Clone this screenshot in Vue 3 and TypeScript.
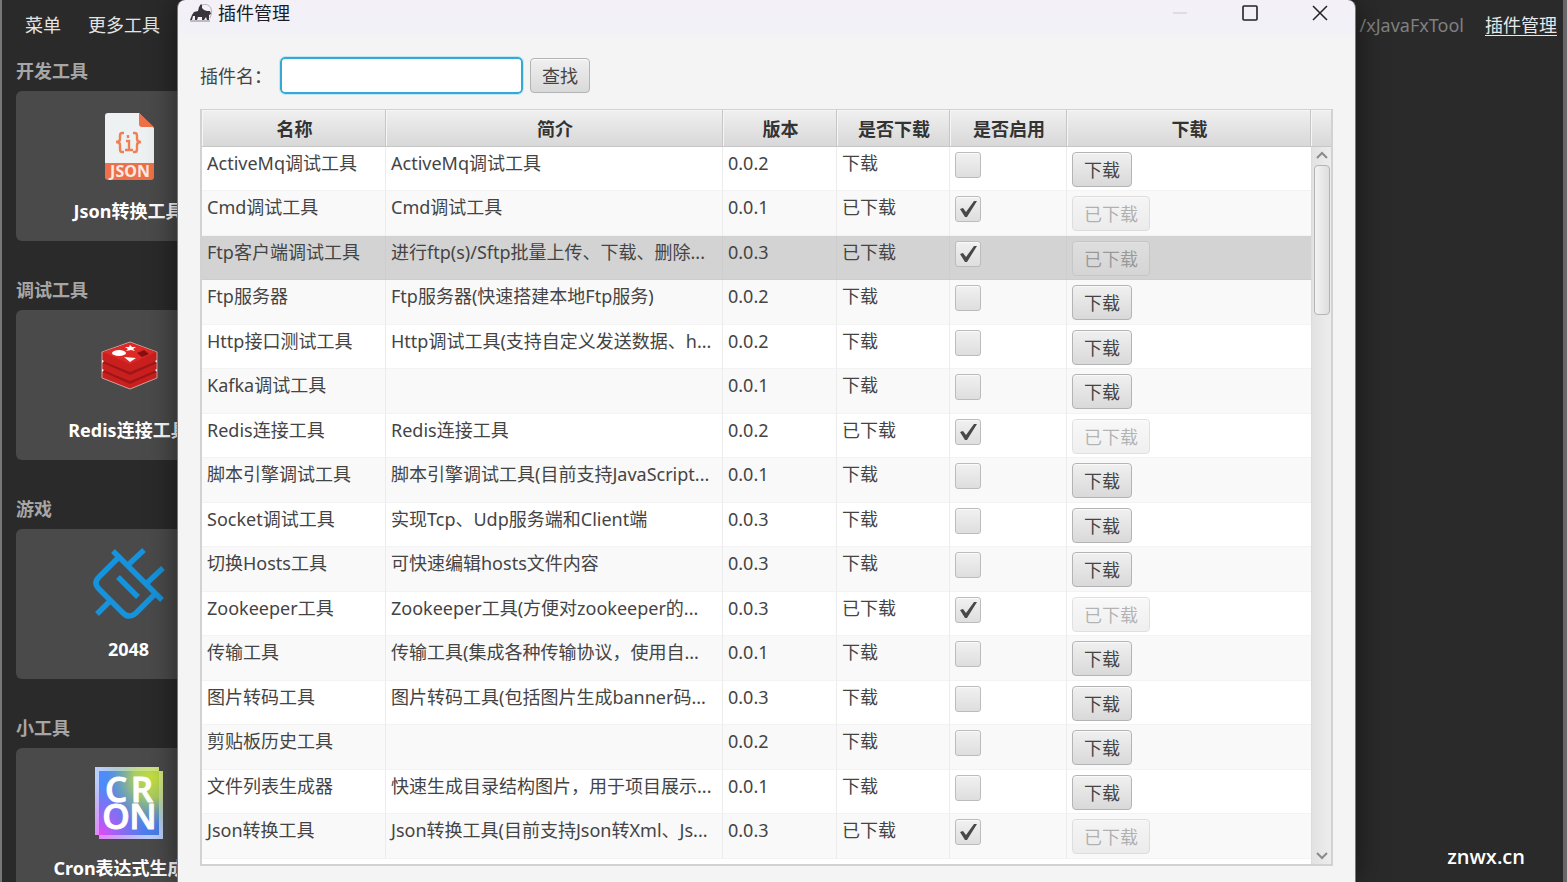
<script setup lang="ts">
import { ref } from 'vue'

interface Plugin {
  name: string
  desc: string
  version: string
  downloaded: boolean
}

const keyword = ref('')
const selected = ref(2)

const plugins = ref<Plugin[]>([
  { name: 'ActiveMq调试工具', desc: 'ActiveMq调试工具', version: '0.0.2', downloaded: false },
  { name: 'Cmd调试工具', desc: 'Cmd调试工具', version: '0.0.1', downloaded: true },
  { name: 'Ftp客户端调试工具', desc: '进行ftp(s)/Sftp批量上传、下载、删除...', version: '0.0.3', downloaded: true },
  { name: 'Ftp服务器', desc: 'Ftp服务器(快速搭建本地Ftp服务)', version: '0.0.2', downloaded: false },
  { name: 'Http接口测试工具', desc: 'Http调试工具(支持自定义发送数据、h...', version: '0.0.2', downloaded: false },
  { name: 'Kafka调试工具', desc: '', version: '0.0.1', downloaded: false },
  { name: 'Redis连接工具', desc: 'Redis连接工具', version: '0.0.2', downloaded: true },
  { name: '脚本引擎调试工具', desc: '脚本引擎调试工具(目前支持JavaScript...', version: '0.0.1', downloaded: false },
  { name: 'Socket调试工具', desc: '实现Tcp、Udp服务端和Client端', version: '0.0.3', downloaded: false },
  { name: '切换Hosts工具', desc: '可快速编辑hosts文件内容', version: '0.0.3', downloaded: false },
  { name: 'Zookeeper工具', desc: 'Zookeeper工具(方便对zookeeper的...', version: '0.0.3', downloaded: true },
  { name: '传输工具', desc: '传输工具(集成各种传输协议，使用自...', version: '0.0.1', downloaded: false },
  { name: '图片转码工具', desc: '图片转码工具(包括图片生成banner码...', version: '0.0.3', downloaded: false },
  { name: '剪贴板历史工具', desc: '', version: '0.0.2', downloaded: false },
  { name: '文件列表生成器', desc: '快速生成目录结构图片，用于项目展示...', version: '0.0.1', downloaded: false },
  { name: 'Json转换工具', desc: 'Json转换工具(目前支持Json转Xml、Js...', version: '0.0.3', downloaded: true },
])

const groups = [
  { title: '开发工具', icon: 'json', label: 'Json转换工具' },
  { title: '调试工具', icon: 'redis', label: 'Redis连接工具' },
  { title: '游戏', icon: 'plug', label: '2048' },
  { title: '小工具', icon: 'cron', label: 'Cron表达式生成器' },
]
</script>

<template>
  <div class="desktop">
    <header class="menubar">
      <nav class="menus">
        <button type="button">菜单</button>
        <button type="button">更多工具</button>
      </nav>
      <div class="links">
        <span class="path">/xJavaFxTool</span>
        <a href="#plugins">插件管理</a>
      </div>
    </header>

    <main class="groups">
      <section v-for="g in groups" :key="g.title" class="group">
        <h2>{{ g.title }}</h2>
        <button type="button" class="card">
          <svg v-if="g.icon === 'json'" viewBox="0 0 72 72" class="icon" aria-hidden="true">
            <path d="M15 2H46L61 17V56H12V5Q12 2 15 2Z" fill="#eef1f1" />
            <path d="M46 2L61 16H49Q46 16 46 13Z" fill="#ee7048" />
            <path d="M12 52H61V66Q61 69 58 69H15Q12 69 12 66Z" fill="#ee7048" />
            <g fill="none" stroke="#ee8058" stroke-width="2.4">
              <path d="M31 22H29Q27 22 27 25V28Q27 31 23 31Q27 31 27 34V38Q27 41 29 41H31" />
              <path d="M40 22H42Q44 22 44 25V28Q44 31 48 31Q44 31 44 34V38Q44 41 42 41H40" />
              <path d="M33 30H36V38M32 39H40M35 24V27" />
            </g>
            <text x="37" y="66" text-anchor="middle" font-size="16" font-weight="700" fill="#fbe9e2">JSON</text>
          </svg>
          <svg v-else-if="g.icon === 'redis'" viewBox="0 0 72 72" class="icon" aria-hidden="true">
            <path d="M37 12L64 22V48L37 59L9 48V22Z" fill="#c9201f" stroke="#cfa09c" stroke-width="1" />
            <path d="M10 31L37 42L64 31V33L37 45L10 33Z" fill="#a01617" />
            <path d="M10 40L37 51L64 40V42L37 54L10 42Z" fill="#a01617" />
            <path d="M37 13L63 22L37 34L10 22Z" fill="#de2a26" />
            <path d="M44 23L51 20L56 24L49 27Z" fill="#86100f" />
            <ellipse cx="26" cy="23" rx="7" ry="3" fill="#fff" />
            <path d="M37 15L39 17L43 17L40 19L42 21L38 20L33 21L35 19L32 17L36 17Z" fill="#fff" />
            <path d="M31 27L43 28L37 32Z" fill="#fff" />
            <path d="M9 30L11 31L9 33ZM9 39L11 40L9 42ZM64 30L62 31L64 33ZM64 39L62 40L64 42Z" fill="#fff" />
          </svg>
          <svg v-else-if="g.icon === 'plug'" viewBox="0 0 72 72" class="icon" aria-hidden="true">
            <g fill="none" stroke="#1593dc" stroke-width="5.4">
              <path d="M20 2L69 51M25 9L6 28Q0 34 6 40L30 64Q36 70 43 64L62 45" />
              <path d="M35 16L51 1M54 34L70 19M4 65L16 53M25 28L45 48" />
            </g>
          </svg>
          <svg v-else viewBox="0 0 72 72" class="icon" aria-hidden="true">
            <defs>
              <linearGradient id="cron-base" x1="0" y1="0" x2="1" y2="1">
                <stop offset="0" stop-color="#4d8dfb" />
                <stop offset="1" stop-color="#4a7de8" />
              </linearGradient>
              <radialGradient id="cron-pink" cx="0" cy="1" r="0.8">
                <stop offset="0" stop-color="#e44af6" />
                <stop offset="1" stop-color="#b05cf5" stop-opacity="0" />
              </radialGradient>
              <radialGradient id="cron-lime" cx="0.9" cy="0.1" r="0.8">
                <stop offset="0" stop-color="#c4e03e" />
                <stop offset="0.4" stop-color="#a9cc62" />
                <stop offset="1" stop-color="#6aa5a0" stop-opacity="0" />
              </radialGradient>
            </defs>
            <g>
              <path d="M2 -1H66V3H70V71H6V67H2Z" fill="#9cb9f8" />
              <path d="M2 -1H66V3H70V71H6V67H2Z" fill="url(#cron-pink)" />
              <path d="M2 -1H66V3H70V71H6V67H2Z" fill="url(#cron-lime)" />
              <path d="M2 -1H66V3H70V71H6V67H2Z" fill="#fff" fill-opacity="0.3" />
              <rect x="6" y="3" width="60" height="64" fill="url(#cron-base)" />
              <rect x="6" y="3" width="60" height="64" fill="url(#cron-pink)" />
              <rect x="6" y="3" width="60" height="64" fill="url(#cron-lime)" />
            </g>
            <text class="cron-text" text-anchor="middle">
              <tspan x="23" y="34">C</tspan><tspan x="49">R</tspan>
              <tspan x="23" y="61">O</tspan><tspan x="50">N</tspan>
            </text>
          </svg>
          <span>{{ g.label }}</span>
        </button>
      </section>
    </main>

    <div class="watermark">znwx.cn</div>

    <div class="dialog" role="dialog" aria-labelledby="dialog-title">
      <div class="titlebar">
        <svg class="app-icon" viewBox="0 0 24 20" aria-hidden="true">
          <path d="M13 2Q19 0 22 5Q24 10 21 15" fill="none" stroke="#b9b6bf" stroke-width="1" />
          <path d="M1 17L3 12L5 9L9 8L10 4L12 1L13 2L13 5L15 7L18 8L21 8L22 11L20 12L20 17H18L17 14L15 17H13L13 14L9 14L8 17H6L6 13L4 13L3 17Z" fill="#38353c" />
          <path d="M1 18H21" stroke="#88848c" stroke-width="1" />
        </svg>
        <span id="dialog-title" class="title">插件管理</span>
        <button type="button" class="win-btn" aria-label="最小化" disabled>
          <svg viewBox="0 0 16 16"><path d="M1 8H15" stroke="#c9c9ce" /></svg>
        </button>
        <button type="button" class="win-btn" aria-label="最大化">
          <svg viewBox="0 0 16 16"><rect x="1" y="1" width="14" height="14" rx="1" fill="none" stroke="#222" stroke-width="1.6" /></svg>
        </button>
        <button type="button" class="win-btn" aria-label="关闭">
          <svg viewBox="0 0 16 16"><path d="M1 1L15 15M15 1L1 15" stroke="#222" stroke-width="1.5" /></svg>
        </button>
      </div>

      <form class="search" @submit.prevent>
        <label for="plugin-name">插件名：</label>
        <input id="plugin-name" v-model="keyword" type="text" />
        <button type="submit" class="btn">查找</button>
      </form>

      <div class="table-box">
        <div class="table-view">
          <table>
            <colgroup>
              <col class="c-name" />
              <col class="c-desc" />
              <col class="c-ver" />
              <col class="c-down" />
              <col class="c-use" />
              <col />
            </colgroup>
            <thead>
              <tr>
                <th>名称</th>
                <th>简介</th>
                <th>版本</th>
                <th>是否下载</th>
                <th>是否启用</th>
                <th>下载</th>
              </tr>
            </thead>
            <tbody>
              <tr v-for="(p, i) in plugins" :key="p.name" :class="{ selected: i === selected }" @click="selected = i">
                <td>{{ p.name }}</td>
                <td>{{ p.desc }}</td>
                <td>{{ p.version }}</td>
                <td>{{ p.downloaded ? '已下载' : '下载' }}</td>
                <td class="ctl"><input type="checkbox" :checked="p.downloaded" :aria-label="'启用 ' + p.name" /></td>
                <td class="ctl">
                  <button type="button" class="btn" :disabled="p.downloaded">{{ p.downloaded ? '已下载' : '下载' }}</button>
                </td>
              </tr>
            </tbody>
          </table>
        </div>
        <div class="side">
          <div class="corner"></div>
          <div class="scrollbar">
            <svg viewBox="0 0 12 8"><path d="M1 7L6 2L11 7" /></svg>
            <div class="thumb"></div>
            <svg viewBox="0 0 12 8"><path d="M1 1L6 6L11 1" /></svg>
          </div>
        </div>
      </div>
    </div>
  </div>
</template>

<style>
body {
  margin: 0;
  overflow: hidden;
}
</style>

<style scoped>
.desktop {
  position: relative;
  box-sizing: border-box;
  height: 100vh;
  overflow: hidden;
  border-left: 2px solid #777;
  border-right: 4px solid #6a6668;
  background: #2a2a2a;
  color: #e4e4e4;
  font: 18px/24px "Noto Sans", "Noto Sans CJK SC", sans-serif;
}

button,
input {
  font: inherit;
  color: inherit;
}

.menubar {
  display: flex;
  justify-content: space-between;
  padding: 13px 6px 0 23px;
}

.menus {
  display: flex;
  gap: 27px;
}

.menus button {
  padding: 0;
  border: 0;
  background: none;
}

.links {
  display: flex;
  gap: 21px;
}

.path {
  color: #808080;
}

.links a {
  color: #e8e8e8;
  text-underline-offset: 3px;
}

.groups {
  display: flex;
  flex-direction: column;
  gap: 37px;
  padding: 22px 0 0 14px;
}

.group h2 {
  margin: 0 0 8px;
  color: #a6a6a6;
  font-size: 18px;
  font-weight: 700;
  line-height: 24px;
}

.card {
  display: flex;
  flex-direction: column;
  align-items: center;
  gap: 16px;
  box-sizing: border-box;
  width: 225px;
  height: 150px;
  padding: 20px 0 0;
  border: 0;
  border-radius: 6px;
  background: #4a4a4a;
  color: #fff;
  font-weight: 700;
}

.icon {
  flex: none;
  width: 72px;
  height: 72px;
  overflow: visible;
}

.cron-text {
  fill: #fff;
  stroke: #fff;
  stroke-width: 1;
  stroke-linejoin: round;
  font-family: "Open Sans", sans-serif;
  font-size: 35px;
  font-weight: 600;
}

.watermark {
  position: absolute;
  right: 38px;
  bottom: 11px;
  color: #fff;
  font-family: "Open Sans", sans-serif;
  font-size: 20px;
  font-weight: 600;
  line-height: 28px;
}

.dialog {
  position: absolute;
  top: 0;
  bottom: 0;
  left: 175px;
  right: 207px;
  display: flex;
  flex-direction: column;
  box-sizing: border-box;
  padding: 0 22px 16px 22px;
  border: solid #777;
  border-width: 0 1px;
  border-radius: 8px 8px 0 0;
  background: linear-gradient(#f4f0f8 0, #f2f1f7 30px, #f4f4f4 44px);
  box-shadow: 0 0 30px rgba(0, 0, 0, 0.5);
  color: #444;
}

.titlebar {
  display: flex;
  align-items: center;
  height: 26px;
  margin: 0 -22px 0 -11px;
  color: #1c1c1c;
}

.app-icon {
  width: 24px;
  height: 20px;
}

.title {
  flex: 1;
  padding-left: 5px;
}

.win-btn {
  display: flex;
  align-items: center;
  justify-content: center;
  width: 70px;
  height: 26px;
  padding: 0;
  border: 0;
  background: none;
}

.win-btn svg {
  width: 16px;
  height: 16px;
}

.search {
  display: flex;
  align-items: center;
  margin: 31px 0 15px;
}

.search label {
  width: 80px;
  white-space: nowrap;
}

.search input {
  box-sizing: border-box;
  width: 243px;
  height: 37px;
  margin-right: 7px;
  padding: 4px 8px;
  border: 2px solid #35a8d3;
  border-radius: 5px;
  outline: 1px solid #c3e6f3;
  outline-offset: 0;
  background: #fff;
}

.btn {
  box-sizing: border-box;
  height: 35px;
  padding: 0 11px;
  border: 1px solid #b4b4b4;
  border-radius: 4px;
  background: linear-gradient(#f0f0f0, #d9d9d9);
  box-shadow: inset 0 1px 0 #fafafa;
  line-height: 24px;
  white-space: nowrap;
}

.btn:disabled {
  opacity: 0.4;
}

.table-box {
  display: flex;
  flex: 1;
  min-height: 0;
  border: 2px solid #d2d2d2;
  border-top-width: 1px;
  background: #fff;
}

.table-view {
  flex: 1;
  min-width: 0;
  overflow: hidden;
}

table {
  width: 100%;
  border-collapse: separate;
  border-spacing: 0;
  table-layout: fixed;
}

.c-name {
  width: 184px;
}

.c-desc {
  width: 337px;
}

.c-ver {
  width: 114px;
}

.c-down {
  width: 113px;
}

.c-use {
  width: 117px;
}

th,
.corner {
  box-sizing: border-box;
  height: 37px;
  padding: 2px 0 0 2px;
  border-right: 1px solid #c6c6c6;
  border-bottom: 1px solid #c6c6c6;
  background: linear-gradient(#f0f0f0, #d8d8d8);
  box-shadow: inset 1px 1px 0 #f6f6f6;
  color: #333;
  font-weight: 700;
}

td {
  box-sizing: border-box;
  height: 45px;
  padding: 4px 5px 0;
  overflow: hidden;
  border-right: 1px solid #ececec;
  border-bottom: 1px solid #f3f3f3;
  vertical-align: top;
  white-space: nowrap;
}

tr:nth-child(odd) td {
  height: 44px;
}

tr:nth-child(even) td {
  background: #f9f9f9;
}

tr.selected td {
  border-color: #cdcdcd;
  background: #d3d3d3;
}

td.ctl {
  padding-top: 5px;
}

td:last-child {
  border-right: 0;
}

.ctl input {
  display: block;
  box-sizing: border-box;
  width: 26px;
  height: 26px;
  margin: 0;
  border: 1px solid #bcbcbc;
  border-radius: 3px;
  appearance: none;
  background: linear-gradient(#f1f1f1, #dedede);
  box-shadow: inset 0 1px 0 #fafafa;
}

.ctl input:checked::after {
  content: "";
  display: block;
  width: 24px;
  height: 24px;
  background: #484848;
  clip-path: polygon(4px 12px, 7px 11px, 10px 15px, 18px 4px, 21px 4px, 11px 20px, 9px 20px);
}

.ctl .btn {
  display: block;
}

.side {
  display: flex;
  flex-direction: column;
  width: 20px;
}

.corner {
  border-right: 0;
}

.scrollbar {
  display: flex;
  flex: 1;
  flex-direction: column;
  align-items: center;
  padding: 4px 0;
  border-left: 1px solid #dcdcdc;
  background: linear-gradient(90deg, #e2e2e2, #ededed);
}

.scrollbar svg {
  width: 12px;
  height: 8px;
  fill: none;
  stroke: #8a8a8a;
  stroke-width: 2;
}

.scrollbar svg:last-child {
  margin-top: auto;
}

.thumb {
  box-sizing: border-box;
  width: 16px;
  height: 150px;
  margin-top: 6px;
  border: 1px solid #b4b4b4;
  border-radius: 4px;
  background: linear-gradient(90deg, #f3f3f3, #dedede);
}
</style>
